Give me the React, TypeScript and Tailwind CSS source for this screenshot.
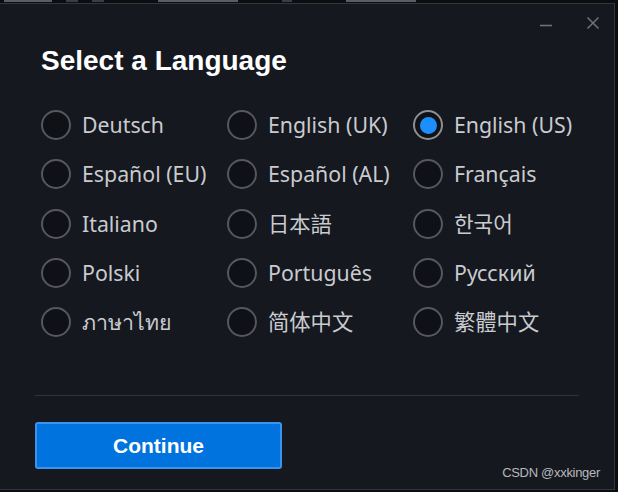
import React from "react";

const langs = [
  "Deutsch", "English (UK)", "English (US)",
  "Español (EU)", "Español (AL)", "Français",
  "Italiano", "日本語", "한국어",
  "Polski", "Português", "Русский",
  "ภาษาไทย", "简体中文", "繁體中文",
];

export default function App() {
  const selected = "English (US)";
  return (
    <div className="w-[618px] h-[492px] bg-[#0c0d10] overflow-hidden relative flex flex-col">
      <div className="h-[3px] overflow-hidden shrink-0 flex items-start gap-[14px] pl-[4px]">
        <div className="w-[48px] h-[2px] bg-[#5a5d63]" />
        <div className="w-[12px] h-[2px] bg-[#3a3d42]" />
        <div className="w-[12px] h-[2px] bg-[#3a3d42]" />
        <div className="w-[80px] h-[2px] bg-[#5a5d63] ml-[40px]" />
        <div className="w-[10px] h-[2px] bg-[#3a3d42] ml-[30px]" />
        <div className="w-[70px] h-[2px] bg-[#5a5d63] ml-[40px]" />
      </div>
      <div className="w-[615px] h-[487px] bg-[#15181f] border-t border-r border-b border-[#33363d] flex flex-col relative">
        <div className="absolute top-[12px] right-[14px] flex items-center gap-[33px]">
          <svg width="14" height="14" viewBox="0 0 14 14">
            <line x1="1" y1="9.5" x2="13" y2="9.5" stroke="#6f7278" strokeWidth="1.6" />
          </svg>
          <svg width="14" height="14" viewBox="0 0 14 14">
            <path d="M1.5 1.5 L12.5 12.5 M12.5 1.5 L1.5 12.5" stroke="#6f7278" strokeWidth="1.5" />
          </svg>
        </div>
        <h1 className="mt-[41px] ml-[41px] text-[28px] leading-[32px] font-bold text-white font-['Liberation_Sans',Arial,sans-serif]">
          Select a Language
        </h1>
        <div className="ml-[41px] mt-[33px] grid grid-cols-[186px_186px_186px] auto-rows-[49.25px]">
          {langs.map((l) => {
            const on = l === selected;
            return (
              <div key={l} className="flex items-start">
                <div
                  className={`w-[30px] h-[30px] rounded-full border-2 bg-[#0f1116] flex items-center justify-center shrink-0 ${on ? "border-[#8c8f95]" : "border-[#55585e]"}`}
                >
                  {on && <div className="w-[17px] h-[17px] rounded-full bg-[#1c8fff]" />}
                </div>
                <span className="ml-[11px] text-[21.3px] leading-[30px] text-[#c9cbcf] whitespace-nowrap font-['Noto_Sans','Noto_Sans_CJK_SC','Noto_Sans_CJK_KR',sans-serif]">
                  {l}
                </span>
              </div>
            );
          })}
        </div>
        <div className="mx-[35px] mt-[39px] h-px bg-[#30333a]" />
        <div className="flex items-end justify-between mt-[26px] ml-[35px] mr-[14px]">
          <button className="w-[247px] h-[47px] rounded-[3px] bg-[#0073de] border-2 border-[#3c93ee] text-white text-[21px] font-bold font-['Liberation_Sans',Arial,sans-serif]">
            Continue
          </button>
          <span className="mb-[-13px] text-[13px] text-[#b7b9bd] font-['Liberation_Sans',Arial,sans-serif] tracking-[-0.3px]">
            CSDN @xxkinger
          </span>
        </div>
      </div>
    </div>
  );
}
